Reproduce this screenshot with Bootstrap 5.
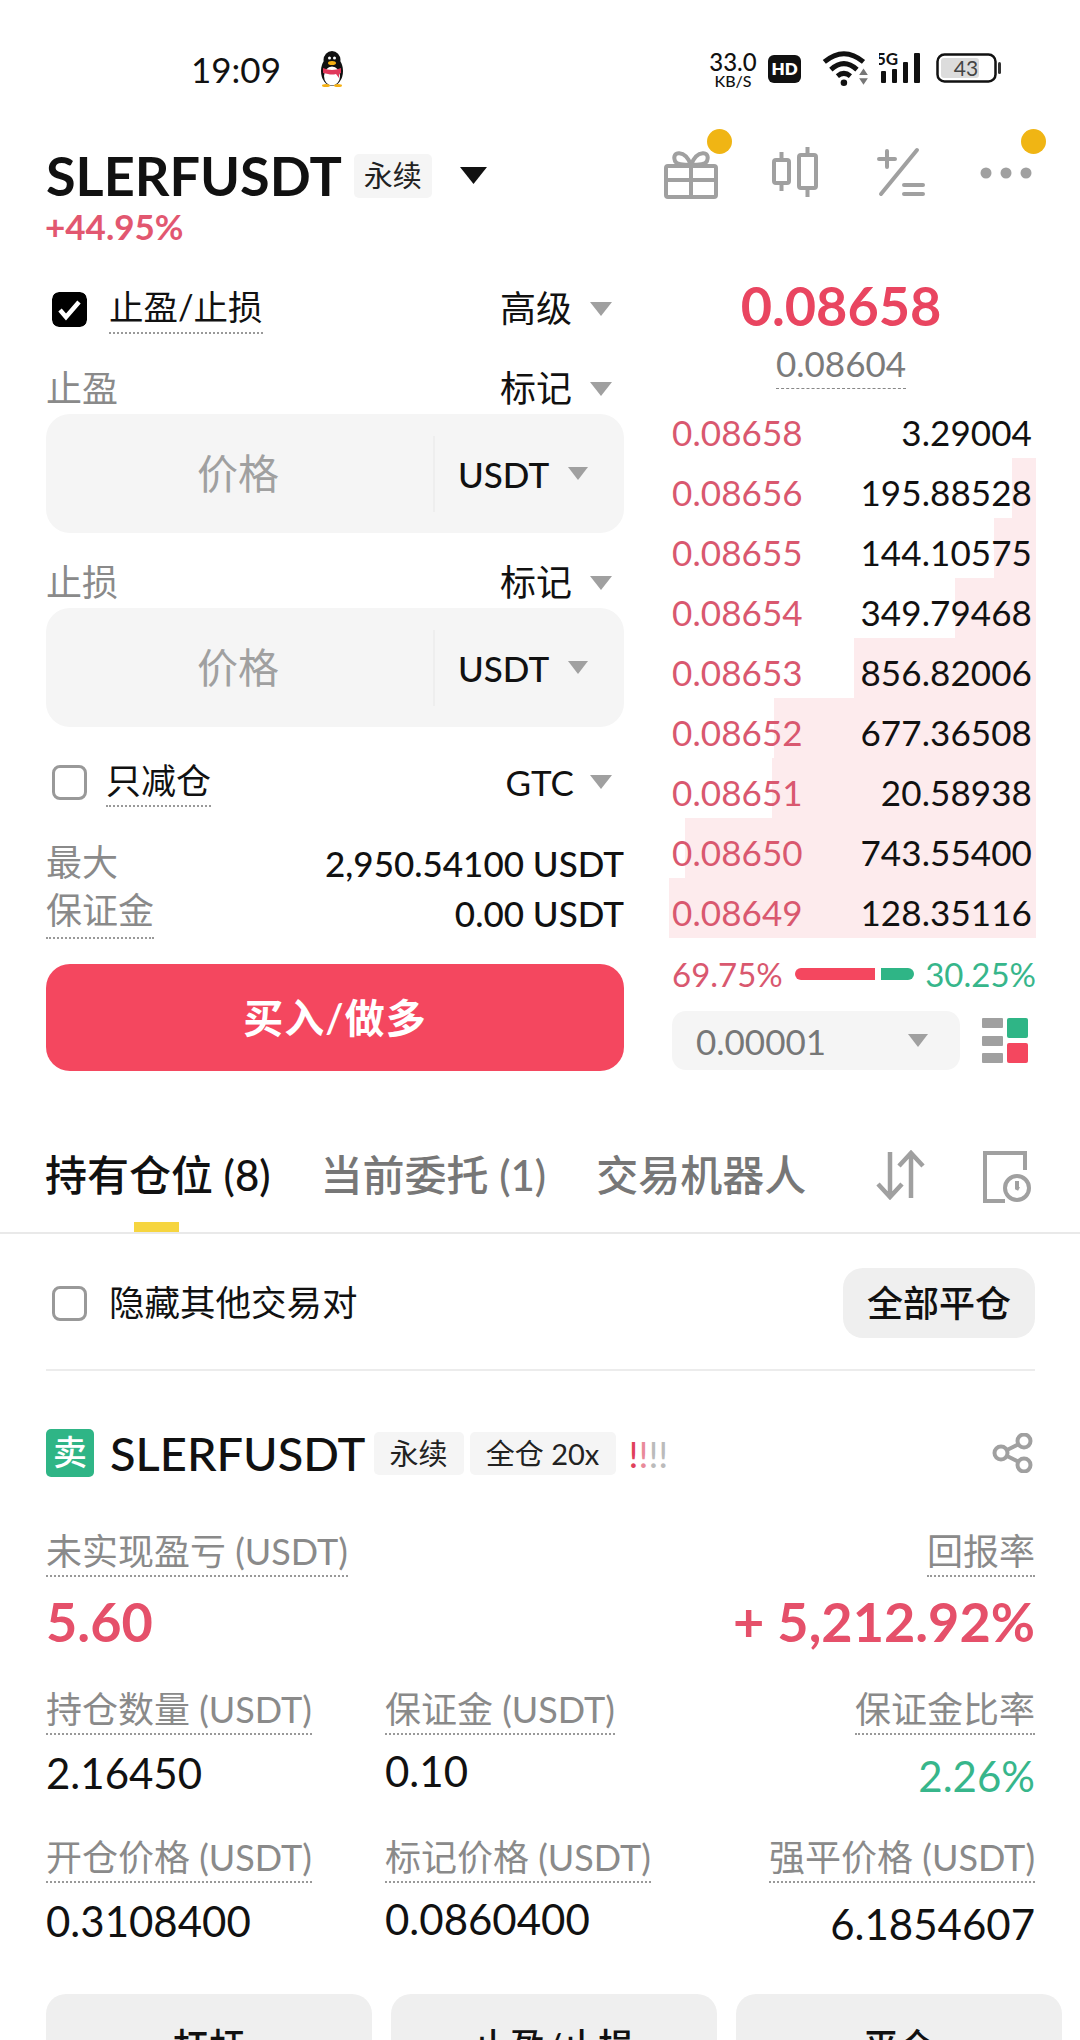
<!doctype html>
<html lang="zh">
<head>
<meta charset="utf-8">
<title>SLERFUSDT</title>
<link href="https://cdn.jsdelivr.net/npm/bootstrap@5.3.0/dist/css/bootstrap.min.css" rel="stylesheet">
<style>
html,body{margin:0;background:#fff}
.phone{width:1080px;height:2040px;overflow:hidden;font-family:Lato,"Noto Sans CJK SC",sans-serif;color:#111;font-size:35px;line-height:1.2}
.statusbar{height:120px;padding-left:191px;padding-top:47px}
.clock{font-size:35px;font-weight:400;line-height:44px;width:126px}
.qq{width:30px;height:36px;margin-top:4px}
.st-right{margin-left:auto;margin-right:78px}
.speed{width:50px;text-align:center;font-weight:500;margin-top:5px;margin-right:10px}
.speed b{display:block;font-weight:500;font-size:24px;line-height:20px}
.speed i{display:block;font-style:normal;font-size:16px;line-height:17px}
.hd{width:33px;height:28px;border-radius:6px;background:#111;color:#fff;font-size:17px;font-weight:800;text-align:center;line-height:28px;margin-top:8px;margin-right:21px}
.st-svg{margin-top:3px}
.battery{width:66px;height:30px;margin-top:6px;position:relative}
.head-row{height:92px;padding:20px 46px 0;}
.sym{font-size:54px;font-weight:700;line-height:72px;font-family:Lato,sans-serif}
.tag{background:#f5f5f5;border-radius:5px;font-size:29px;color:#222;display:inline-block;white-space:nowrap}
.tag-lg{width:78px;height:44px;line-height:44px;text-align:center;margin-left:12px}
.big-caret{margin-left:28px;margin-top:-2px}
.tools{margin-left:auto;gap:49px;margin-top:-6px}
.tool{width:56px;height:52px;position:relative}
.notice{position:absolute;width:25px;height:25px;border-radius:50%;background:#f0b514}
.pct{padding-left:45px;height:32px;line-height:28px;font-size:35px;font-weight:700;color:#e25770}
.trade{padding:35px 44px 0 46px;gap:48px}
.left-col{width:578px}
.right-col{width:364px}
.row-line{height:60px}
.tick{width:35px;height:35px;border-radius:7px;flex:none}
.tick-off{border:3px solid #999;background:#fff;border-radius:8px}
.dot-u{display:inline-block;border-bottom:2px dotted #999;padding-bottom:5px;line-height:1.15;margin-top:3px}
.t36{font-size:35px}
.t-opt{font-size:36px}
.caret-g{width:22px;height:14px;flex:none;margin-left:18px;margin-right:12px}
.lab-row{height:50px}
.muted-g{color:#8a8a8a}
.num32{font-size:35px;font-weight:500}
.box{height:119px;border-radius:24px;background:#f5f5f5;margin-bottom:25px}
.box-main{width:387px;padding-left:151px;font-size:41px;color:#a0a0a0}
.box-unit{flex:1;height:76px;border-left:2px solid #eeeeee;padding-left:23px;font-size:35px;font-weight:500;gap:19px}
.buy{width:100%;height:107px;border:0;border-radius:24px;background:#f4475f;color:#fff;font-size:40px;font-weight:600;margin-top:26px;letter-spacing:1px}
.last{color:#e94560;font-size:54px;font-weight:700;line-height:54px;text-align:center;padding-right:26px}
.mark-p{text-align:center;height:55px;margin-top:10px;line-height:40px;padding-right:26px}
.mark-p span{display:inline-block;color:#7b7b7b;font-size:35px;line-height:38px;border-bottom:1px dashed #888;padding-bottom:6px}
.book-row{height:60px;position:relative;padding:12px 4px 0 0;line-height:44px;font-size:35px;letter-spacing:.1px}
.depth{position:absolute;right:0;top:0;height:60px;background:#fdebed}
.book-row span{position:relative}
.ask{color:#d9586f}
.ratio-row{height:30px;margin-top:21px;margin-bottom:1px;font-size:33px;line-height:30px}
.bar-r{width:80px;height:12px;border-radius:6px 0 0 6px;background:#f4475f;margin:0 6px 0 auto}
.bar-g{width:33px;height:12px;border-radius:0 6px 6px 0;background:#2fb586;margin-right:auto}
.grn{color:#37b68b}
.sel-row{margin-top:22px;height:59px}
.sel{width:288px;height:59px;border-radius:14px;background:#f5f5f5;padding:0 32px 0 24px;color:#777;font-size:35px}
.layout-ic{margin-left:22px}
.tabs{margin-top:29px;height:134px;border-bottom:2px solid #e9e9e9;padding:51px 48px 0 45px;position:relative;font-size:42px;line-height:48px}
.tab{margin-right:50px;font-weight:500;color:#777;white-space:nowrap}
.tab-on{color:#111}
.ind{position:absolute;left:134px;bottom:0;width:45px;height:10px;background:#f6d53f}
.tab-ic{margin-left:auto;gap:57px;margin-top:-1px}
.hide-row{margin:34px 45px 0 46px;padding-bottom:31px;border-bottom:2px solid #ececec}
.btn-all{width:192px;height:70px;border-radius:20px;background:#efefef;border:0;padding:0;color:#111;font-size:36px;font-weight:500}
.pos-head{margin:58px 46px 0;height:48px}
.sell{width:48px;height:48px;border-radius:5px;background:#2fb586;color:#fff;font-size:34px;font-weight:500;text-align:center;line-height:46px}
.pos-sym{font-size:47px;font-weight:500;margin-left:16px;font-family:Lato,sans-serif}
.tag-sm{height:43px;line-height:43px;text-align:center}
.warn{margin-left:13px;font-size:37px;line-height:43px;font-weight:400}
.metrics{margin:53px 45px 0 46px}
.lbl{font-size:36px;color:#8a8a8a;line-height:42px}
.lbl .dot-u{padding-bottom:3px;line-height:42px;margin-top:0}
.pnl{font-size:54px;font-weight:700;color:#e5506a;line-height:58px;margin-top:16px}
.grid3{display:grid;grid-template-columns:339px 1fr auto}
.val{font-size:42px;line-height:48px;margin-top:14px}
.val-mid{margin-top:12px}
.val-end{margin-top:17px}
.act{margin:0 0 0 46px;gap:19px;width:1016px}
.act button{flex:1;height:104px;border:0;border-radius:20px;background:#efefef;font-size:36px;font-weight:500;color:#111;padding:0;line-height:44px;align-self:start}
</style>
</head>
<body>
<div class="phone">
  <div class="statusbar d-flex">
    <div class="clock">19:09</div>
    <svg class="qq" viewBox="0 0 30 36"><ellipse cx="15" cy="20" rx="11" ry="15" fill="#111"/><ellipse cx="15" cy="9" rx="8.500" ry="9" fill="#111"/><ellipse cx="15" cy="25" rx="8" ry="9.500" fill="#fff"/><path d="M6 17q9 4 18 0v5l-2 1v4l-3-4q-4 1-8 0l-5-1z" fill="#e0385a"/><ellipse cx="15" cy="12" rx="4" ry="2" fill="#f5b014"/><circle cx="12.500" cy="7" r="1.500" fill="#fff"/><circle cx="17.500" cy="7" r="1.500" fill="#fff"/><ellipse cx="9" cy="34.500" rx="4" ry="1.500" fill="#f5b014"/><ellipse cx="21" cy="34.500" rx="4" ry="1.500" fill="#f5b014"/></svg>
    <div class="st-right d-flex">
      <div class="speed"><b>33.0</b><i>KB/S</i></div>
      <div class="hd">HD</div>
      <svg class="st-svg" width="46" height="37" viewBox="0 0 42 34"><g fill="none" stroke="#111" stroke-width="4.500"><path d="M2 11Q20 -4 38 11"/><path d="M8 18Q20 7 32 18"/><path d="M14 24Q20 19 26 24"/></g><circle cx="20" cy="30" r="3" fill="#111"/><path d="M38 17l4 6h-8zM38 32l4-6h-8z" fill="#777"/></svg>
      <svg class="st-svg" width="46" height="34" viewBox="0 0 46 34" style="margin:4px 11px 0 11px"><text x="-3" y="14" font-size="17" font-weight="700" font-family="Lato" fill="#111">5G</text><g fill="#111"><rect x="2" y="20" width="5" height="12" rx="1"/><rect x="13" y="18" width="5" height="14" rx="1"/><rect x="24" y="11" width="5" height="21" rx="1"/><rect x="35" y="2" width="6" height="30" rx="1"/></g></svg>
      <svg class="battery" viewBox="0 0 66 30"><rect x="1.500" y="1.500" width="58" height="27" rx="7" fill="#fff" stroke="#111" stroke-width="2.500"/><rect x="5" y="5" width="38" height="20" rx="3" fill="#dcdcdc"/><rect x="62" y="9" width="3" height="12" rx="1.500" fill="#333"/><text x="30" y="23" font-size="21" text-anchor="middle" font-family="Lato" fill="#444">43</text></svg>
    </div>
  </div>

  <div class="head-row d-flex align-items-center">
    <span class="sym">SLERFUSDT</span>
    <span class="tag tag-lg">永续</span>
    <svg class="big-caret" width="27" height="17" viewBox="0 0 27 17"><path d="M0 0h27L13.500 17z" fill="#111"/></svg>
    <div class="tools d-flex">
      <div class="tool">
        <svg width="56" height="52" viewBox="0 0 56 52" fill="none" stroke="#a0a0a0" stroke-width="4"><rect x="3" y="19" width="50" height="31" rx="2"/><path d="M1 33h54M28 19v31"/><path d="M28 18c-6-16-20-14-16-4 1 3 8 4 16 4zM28 18c6-16 20-14 16-4-1 3-8 4-16 4z"/></svg>
        <span class="notice" style="left:44px;top:-18px"></span>
      </div>
      <div class="tool">
        <svg width="56" height="52" viewBox="0 0 56 52" fill="none" stroke="#a0a0a0" stroke-width="4"><rect x="6" y="13" width="15" height="23" rx="2"/><path d="M13.500 5v8M13.500 36v8"/><rect x="31" y="8" width="17" height="33" rx="2"/><path d="M39.500 0v8M39.500 41v9"/></svg>
      </div>
      <div class="tool">
        <svg width="56" height="52" viewBox="0 0 56 52" fill="none" stroke="#a0a0a0" stroke-width="4" stroke-linecap="round"><path d="M6 12h16M14 4v16M44 3L8 47M31 38h19M31 47h19"/></svg>
      </div>
      <div class="tool">
        <svg width="56" height="52" viewBox="0 0 56 52" fill="#a0a0a0"><circle cx="8" cy="26" r="5.500"/><circle cx="28" cy="26" r="5.500"/><circle cx="48" cy="26" r="5.500"/></svg>
        <span class="notice" style="left:43px;top:-18px"></span>
      </div>
    </div>
  </div>
  <div class="pct">+44.95%</div>

  <div class="trade d-flex">
    <div class="left-col">
      <div class="row-line d-flex align-items-center">
        <svg class="tick" style="margin-left:6px" viewBox="0 0 35 35"><rect width="35" height="35" rx="7" fill="#000"/><path d="M8 18l6 7L27 10" fill="none" stroke="#fff" stroke-width="4.500"/></svg>
        <span class="dot-u" style="margin-left:22px;font-size:34.500px">止盈/止损</span>
        <span class="t-opt ms-auto">高级</span>
        <svg class="caret-g" viewBox="0 0 22 14"><path d="M0 0h22L11 14z" fill="#a0a0a0"/></svg>
      </div>
      <div class="lab-row d-flex align-items-center" style="margin-top:25px">
        <span class="t-opt muted-g">止盈</span>
        <span class="t-opt ms-auto">标记</span>
        <svg class="caret-g" viewBox="0 0 22 14"><path d="M0 0h22L11 14z" fill="#a0a0a0"/></svg>
      </div>
      <div class="box d-flex align-items-center">
        <div class="box-main">价格</div>
        <div class="box-unit d-flex align-items-center">USDT <svg width="20" height="13" viewBox="0 0 20 13"><path d="M0 0h20L10 13z" fill="#a0a0a0"/></svg></div>
      </div>
      <div class="lab-row d-flex align-items-center">
        <span class="t-opt muted-g">止损</span>
        <span class="t-opt ms-auto">标记</span>
        <svg class="caret-g" viewBox="0 0 22 14"><path d="M0 0h22L11 14z" fill="#a0a0a0"/></svg>
      </div>
      <div class="box d-flex align-items-center">
        <div class="box-main">价格</div>
        <div class="box-unit d-flex align-items-center">USDT <svg width="20" height="13" viewBox="0 0 20 13"><path d="M0 0h20L10 13z" fill="#a0a0a0"/></svg></div>
      </div>
      <div class="row-line d-flex align-items-center">
        <span class="tick tick-off" style="margin-left:6px"></span>
        <span class="dot-u t36" style="margin-left:19px">只减仓</span>
        <span class="ms-auto">GTC</span>
        <svg class="caret-g" style="margin-left:16px" viewBox="0 0 22 14"><path d="M0 0h22L11 14z" fill="#a0a0a0"/></svg>
      </div>
      <div class="lab-row d-flex align-items-center" style="margin-top:26px">
        <span class="t-opt muted-g">最大</span><span class="ms-auto num32">2,950.54100 USDT</span>
      </div>
      <div class="lab-row d-flex align-items-center">
        <span class="t-opt muted-g dot-u">保证金</span><span class="ms-auto num32">0.00 USDT</span>
      </div>
      <button class="buy btn" type="button">买入/做多</button>
    </div>

    <div class="right-col">
      <div class="last">0.08658</div>
      <div class="mark-p"><span>0.08604</span></div>
      <div class="book-row d-flex justify-content-between"><span class="ask">0.08658</span><span>3.29004</span></div>
      <div class="book-row d-flex justify-content-between"><i class="depth" style="width:24px"></i><span class="ask">0.08656</span><span>195.88528</span></div>
      <div class="book-row d-flex justify-content-between"><i class="depth" style="width:42px"></i><span class="ask">0.08655</span><span>144.10575</span></div>
      <div class="book-row d-flex justify-content-between"><i class="depth" style="width:81px"></i><span class="ask">0.08654</span><span>349.79468</span></div>
      <div class="book-row d-flex justify-content-between"><i class="depth" style="width:182px"></i><span class="ask">0.08653</span><span>856.82006</span></div>
      <div class="book-row d-flex justify-content-between"><i class="depth" style="width:262px"></i><span class="ask">0.08652</span><span>677.36508</span></div>
      <div class="book-row d-flex justify-content-between"><i class="depth" style="width:264px"></i><span class="ask">0.08651</span><span>20.58938</span></div>
      <div class="book-row d-flex justify-content-between"><i class="depth" style="width:351px"></i><span class="ask">0.08650</span><span>743.55400</span></div>
      <div class="book-row d-flex justify-content-between"><i class="depth" style="width:367px"></i><span class="ask">0.08649</span><span>128.35116</span></div>
      <div class="ratio-row d-flex align-items-center"><span class="ask">69.75%</span><i class="bar-r"></i><i class="bar-g"></i><span class="grn">30.25%</span></div>
      <div class="sel-row d-flex align-items-center">
        <div class="sel d-flex align-items-center justify-content-between">0.00001<svg width="20" height="13" viewBox="0 0 20 13"><path d="M0 0h20L10 13z" fill="#a0a0a0"/></svg></div>
        <svg class="layout-ic" width="46" height="46" viewBox="0 0 46 46"><g fill="#a0a0a0"><rect width="21" height="10" rx="1"/><rect y="18" width="21" height="10" rx="1"/><rect y="35" width="21" height="10" rx="1"/></g><rect x="25" width="21" height="20" rx="2" fill="#2fb586"/><rect x="25" y="25" width="21" height="20" rx="2" fill="#f4475f"/></svg>
      </div>
    </div>
  </div>

  <div class="tabs d-flex">
    <div class="tab tab-on">持有仓位 (8)</div>
    <div class="tab">当前委托 (1)</div>
    <div class="tab">交易机器人</div>
    <div class="tab-ic d-flex">
      <svg width="50" height="50" viewBox="0 0 50 50" fill="none" stroke="#a0a0a0" stroke-width="4.500"><path d="M15 2v44M3 34l12 13 12-13M36 48V3M24 16L36 3l12 13"/></svg>
      <svg width="50" height="54" viewBox="0 0 50 54" fill="none" stroke="#a0a0a0" stroke-width="4"><path d="M43 20V3H3v48h20"/><circle cx="35" cy="38" r="12"/><path d="M35 31v7l2 1"/></svg>
    </div>
    <span class="ind"></span>
  </div>

  <div class="hide-row d-flex align-items-center">
    <span class="tick tick-off" style="margin-left:6px"></span>
    <span style="font-size:35.500px;margin-left:22px">隐藏其他交易对</span>
    <button class="btn-all btn ms-auto" type="button">全部平仓</button>
  </div>

  <div class="pos-head d-flex align-items-center">
    <div class="sell">卖</div>
    <span class="pos-sym">SLERFUSDT</span>
    <span class="tag tag-sm" style="width:90px;margin-left:8px">永续</span>
    <span class="tag tag-sm" style="width:146px;margin-left:6px">全仓 20x</span>
    <span class="warn"><span style="color:#e0405c">!</span><span style="color:#e98a9a">!</span><span style="color:#bbb">!!</span></span>
    <svg class="ms-auto" width="42" height="40" viewBox="0 0 42 40" fill="none" stroke="#a0a0a0" stroke-width="4"><circle cx="9" cy="20" r="6.500"/><circle cx="32" cy="8" r="6.500"/><circle cx="32" cy="32" r="6.500"/><path d="M15 17l12-6M15 23l12 6"/></svg>
  </div>

  <div class="metrics">
    <div class="lbl d-flex justify-content-between"><span class="dot-u">未实现盈亏 (USDT)</span><span class="dot-u">回报率</span></div>
    <div class="pnl d-flex justify-content-between"><span>5.60</span><span>+ 5,212.92%</span></div>
    <div class="grid3" style="margin-top:37px">
      <div class="lbl"><span class="dot-u">持仓数量 (USDT)</span></div>
      <div class="lbl"><span class="dot-u">保证金 (USDT)</span></div>
      <div class="lbl text-end"><span class="dot-u">保证金比率</span></div>
      <div class="val">2.16450</div>
      <div class="val val-mid">0.10</div>
      <div class="val val-end text-end grn">2.26%</div>
    </div>
    <div class="grid3" style="margin-top:36px">
      <div class="lbl"><span class="dot-u">开仓价格 (USDT)</span></div>
      <div class="lbl"><span class="dot-u">标记价格 (USDT)</span></div>
      <div class="lbl text-end"><span class="dot-u">强平价格 (USDT)</span></div>
      <div class="val">0.3108400</div>
      <div class="val val-mid">0.0860400</div>
      <div class="val val-end text-end">6.1854607</div>
    </div>
  </div>
  <div class="act d-flex" style="margin-top:46px">
    <button class="btn" type="button">杠杆</button>
    <button class="btn" type="button">止盈/止损</button>
    <button class="btn" type="button">平仓</button>
  </div>
</div>
<script src="https://cdn.jsdelivr.net/npm/bootstrap@5.3.0/dist/js/bootstrap.bundle.min.js"></script>
</body>
</html>
